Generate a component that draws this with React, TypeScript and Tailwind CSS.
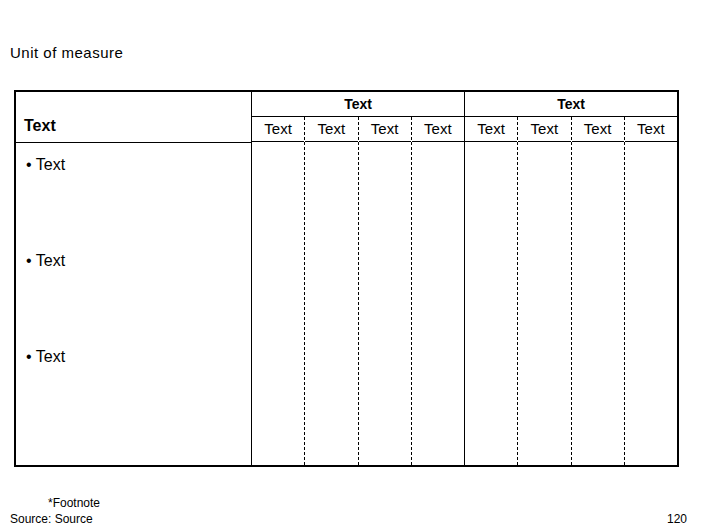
import React from 'react'

const groups = [0, 1]
const cols = [0, 1, 2, 3]
const bullets = ['Text', 'Text', 'Text']

function Group({ last }: { last: boolean }) {
  return (
    <div className={`flex flex-1 flex-col ${last ? '' : 'border-r border-black'}`}>
      {/* group header */}
      <div className="flex h-[25px] items-center justify-center border-b border-black text-[14px] font-bold leading-[16px]">
        Text
      </div>
      <div className="flex flex-1">
        {cols.map((c) => (
          <div
            key={c}
            className={`flex flex-1 flex-col ${c < 3 ? 'border-r border-dashed border-black' : ''}`}
          >
            <div className="flex h-[25px] items-center justify-center border-b border-black text-[15px] leading-[16px]">
              Text
            </div>
            <div className="flex-1" />
          </div>
        ))}
      </div>
    </div>
  )
}

export default function App() {
  return (
    <div className="relative h-[529px] w-[706px] overflow-hidden bg-white font-['Liberation_Sans',Arial,sans-serif] text-black">
      <div className="pl-[10px] pt-[45px] text-[15px] leading-[16px] tracking-[0.5px]">Unit of measure</div>

      {/* Table */}
      <div className="ml-[14px] mt-[29px] flex h-[377px] w-[665px] border-2 border-black">
        {/* Row label column */}
        <div className="flex w-[236px] shrink-0 flex-col border-r border-black">
          <div className="flex h-[51px] items-end border-b border-black pb-[8px] pl-[8px] text-[16px] font-bold leading-[16px]">
            Text
          </div>
          <div className="flex flex-col">
            {bullets.map((b, i) => (
              <div key={i} className="h-[96px] pl-[10px] pt-[13px] text-[16px] leading-[18px]">
                • {b}
              </div>
            ))}
          </div>
        </div>

        {groups.map((g) => (
          <Group key={g} last={g === groups.length - 1} />
        ))}
      </div>

      {/* Footer */}
      <div className="mt-[28px] text-[12px] leading-[16px]">
        <div className="pl-[48px]">*Footnote</div>
        <div className="flex justify-between pl-[10px] pr-[19px]">
          <span>Source: Source</span>
          <span>120</span>
        </div>
      </div>
    </div>
  )
}
